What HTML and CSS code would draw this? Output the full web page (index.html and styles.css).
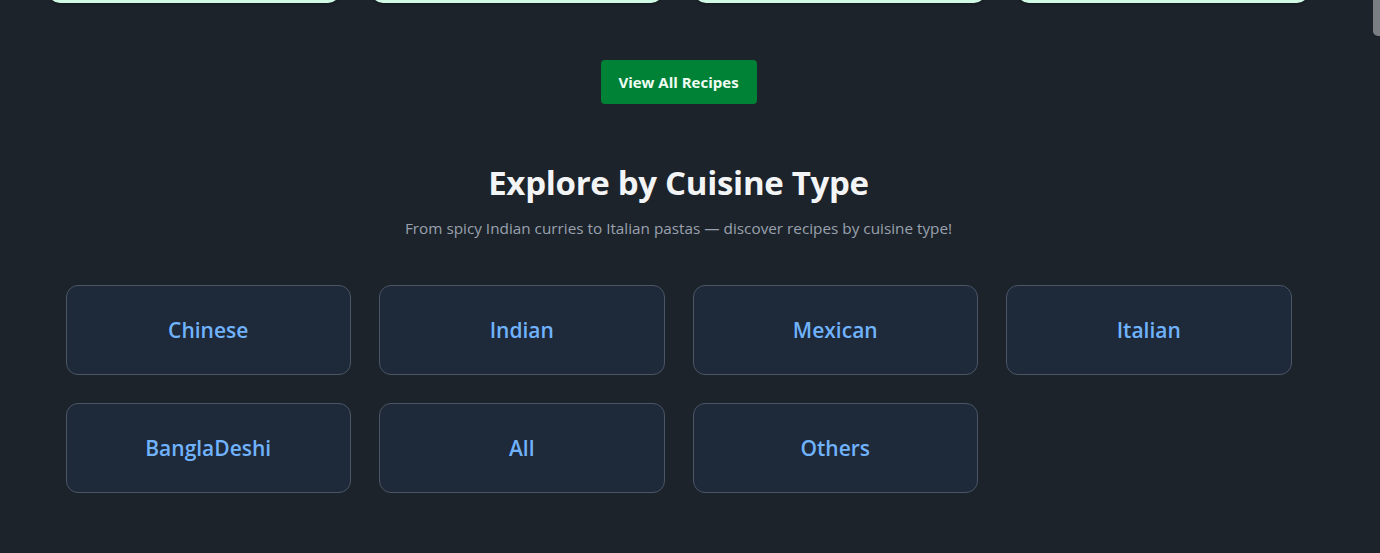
FILE: index.html
```html
<!DOCTYPE html>
<html lang="en">
<head>
<meta charset="utf-8">
<title>Recipes</title>
<link rel="stylesheet" href="styles.css">
</head>
<body>
<div class="page">
  <div class="recipe-row">
    <div class="recipe-card"></div>
    <div class="recipe-card"></div>
    <div class="recipe-card"></div>
    <div class="recipe-card"></div>
  </div>
  <div class="cta">
    <a class="btn-all" href="#">View All Recipes</a>
  </div>
  <section class="cuisine">
    <h2 class="cuisine-title">Explore by Cuisine Type</h2>
    <p class="cuisine-sub">From spicy Indian curries to Italian pastas — discover recipes by cuisine type!</p>
    <div class="cuisine-grid">
      <a class="cuisine-card" href="#">Chinese</a>
      <a class="cuisine-card" href="#">Indian</a>
      <a class="cuisine-card" href="#">Mexican</a>
      <a class="cuisine-card" href="#">Italian</a>
      <a class="cuisine-card" href="#">BanglaDeshi</a>
      <a class="cuisine-card" href="#">All</a>
      <a class="cuisine-card" href="#">Others</a>
    </div>
  </section>
</div>
<div class="scroll-thumb"></div>
</body>
</html>
```

FILE: styles.css
```css
html, body {
  margin: 0;
  padding: 0;
  height: 100%;
  overflow: hidden;
}
body {
  background: #1d232a;
  font-family: "Open Sans", "Noto Sans", sans-serif;
  color: #f3f4f6;
}
.page {
  width: 1357px;
  display: flex;
  flex-direction: column;
  align-items: center;
}
.recipe-row {
  display: grid;
  grid-template-columns: repeat(4, 292px);
  column-gap: 31px;
  margin-top: -37px;
}
.recipe-card {
  height: 40px;
  background: #d0fae5;
  border-radius: 12px;
  box-shadow: 0 1px 3px rgba(0,0,0,0.3);
}
.cta {
  margin-top: 57px;
  display: flex;
  justify-content: center;
}
.btn-all {
  display: flex;
  align-items: center;
  justify-content: center;
  width: 156px;
  height: 44px;
  box-sizing: border-box;
  background: #008236;
  color: #f0fdf4;
  border-radius: 4px;
  font-size: 15px;
  font-weight: 700;
  text-decoration: none;
}
.cuisine {
  display: flex;
  flex-direction: column;
  align-items: center;
  margin-top: 58px;
}
.cuisine-title {
  margin: 0;
  font-size: 33px;
  line-height: 42px;
  font-weight: 700;
  color: #f3f4f6;
  letter-spacing: -0.3px;
}
.cuisine-sub {
  margin: 14px 0 0;
  font-size: 15.3px;
  line-height: 20px;
  color: #99a1af;
}
.cuisine-grid {
  margin-top: 47px;
  display: grid;
  grid-template-columns: repeat(4, 285.5px);
  column-gap: 28px;
  row-gap: 28px;
}
.cuisine-card {
  height: 90px;
  box-sizing: border-box;
  display: flex;
  align-items: center;
  justify-content: center;
  background: #1e2939;
  border: 1px solid #4a5565;
  border-radius: 12px;
  color: #70b3fc;
  font-size: 21px;
  font-weight: 600;
  text-decoration: none;
}
.scroll-thumb {
  position: fixed;
  top: 0;
  right: 0;
  width: 7px;
  height: 36px;
  background: #7a7d82;
  border-radius: 0 0 0 5px;
}
```
